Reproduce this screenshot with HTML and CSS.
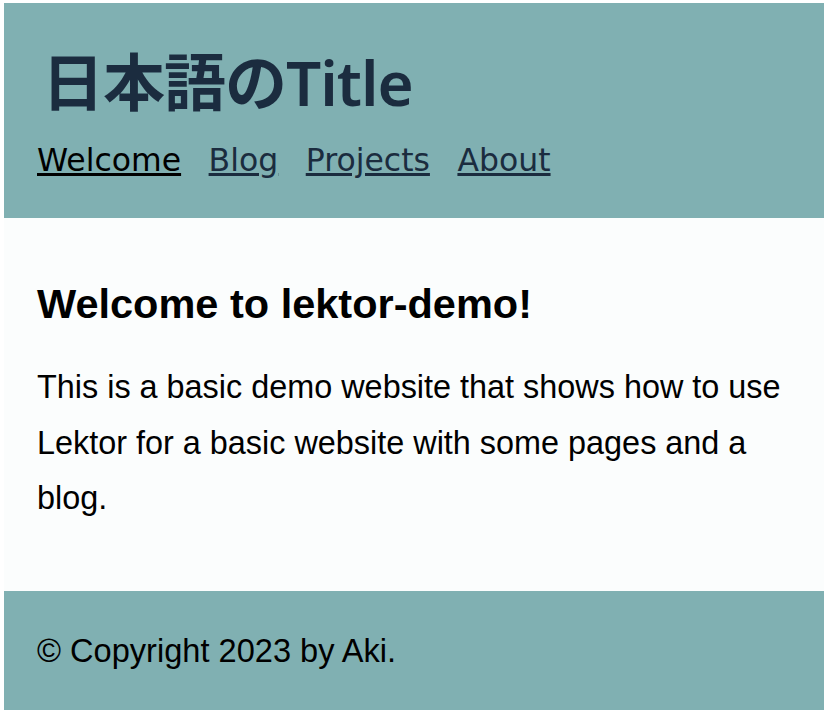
FILE: index.html
```html
<!DOCTYPE html>
<html lang="ja">
<head>
<meta charset="utf-8">
<title>日本語のTitle</title>
<link rel="stylesheet" href="styles.css">
</head>
<body>
<header class="site-header">
  <h1 class="site-title">日本語のTitle</h1>
  <nav class="site-nav">
    <a class="nav-link active" href="#">Welcome</a>
    <a class="nav-link" href="#">Blog</a>
    <a class="nav-link" href="#">Projects</a>
    <a class="nav-link" href="#">About</a>
  </nav>
</header>
<main class="page">
  <h2 class="page-title">Welcome to lektor-demo!</h2>
  <p class="page-text">This is a basic demo website that shows how to use Lektor for a basic website with some pages and a blog.</p>
</main>
<footer class="site-footer">© Copyright 2023 by Aki.</footer>
</body>
</html>
```
FILE: styles.css
```css
html {
  background: #ffffff;
}
body {
  margin: 3px 4px 0 4px;
  font-family: "Liberation Sans", Arial, sans-serif;
  color: #000;
}
.site-header {
  background: #80b0b2;
  padding: 42px 33px 36px 33px;
}
.site-title {
  margin: 0 0 0 5px;
  font-family: "Noto Sans", "Noto Sans CJK JP", sans-serif;
  font-size: 62px;
  font-weight: 600;
  letter-spacing: -1px;
  line-height: 74px;
  color: #1b2c3f;
}
.site-nav {
  margin-top: 19px;
  display: flex;
  gap: 27.5px;
  font-family: "DejaVu Sans", Verdana, sans-serif;
  font-size: 31.5px;
  line-height: 44px;
}
.nav-link {
  color: #1b2c3f;
  text-decoration: underline;
}
.nav-link.active {
  color: #000;
}
.page {
  background: #fbfdfd;
  padding: 61px 33px 64px 33px;
}
.page-title {
  margin: 0;
  font-size: 41.5px;
  font-weight: 700;
  line-height: 49.2px;
}
.page-text {
  margin: 32px 0 0 0;
  font-size: 32.4px;
  line-height: 55.5px;
}
.site-footer {
  background: #80b0b2;
  padding: 32px 33px;
  font-size: 32.6px;
  line-height: 55px;
}
```
